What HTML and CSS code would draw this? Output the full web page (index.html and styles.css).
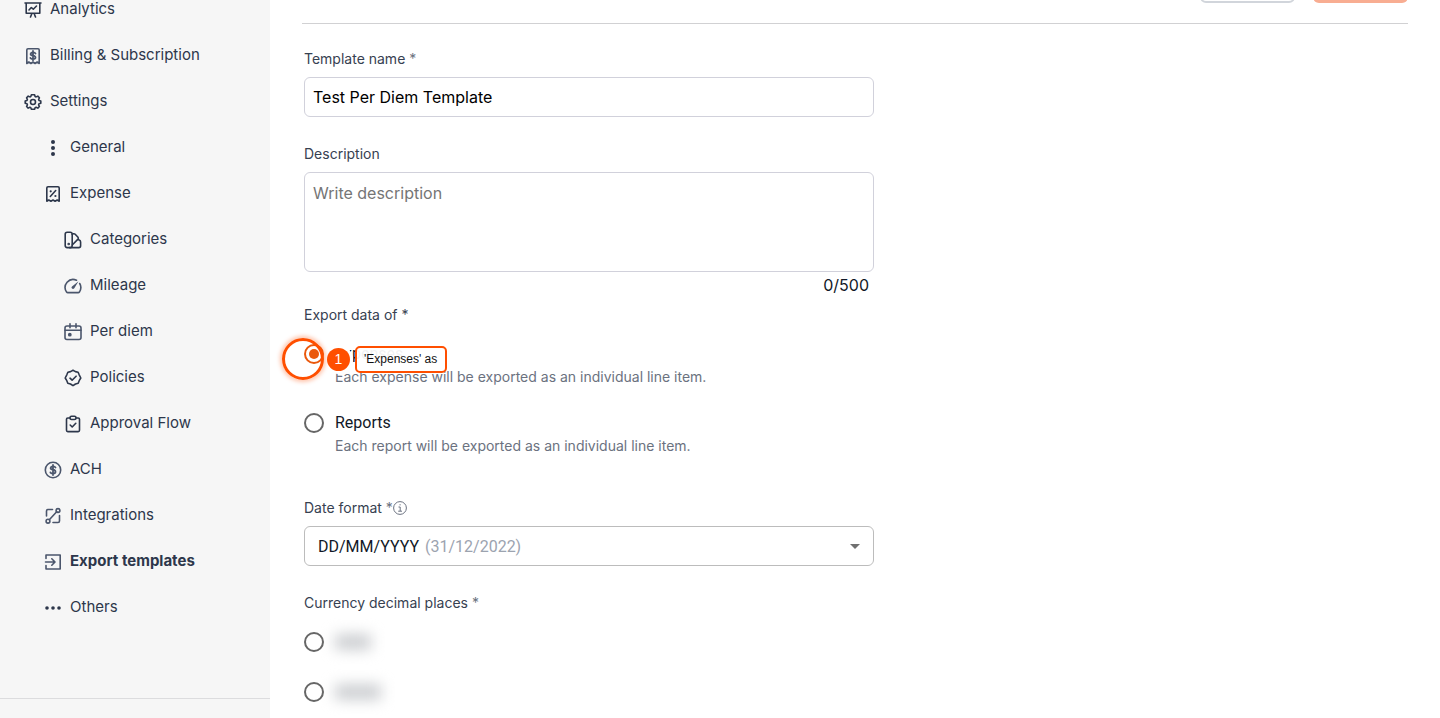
FILE: index.html
```html
<!DOCTYPE html>
<html lang="en">
<head>
<meta charset="utf-8">
<title>Export templates</title>
<link rel="stylesheet" href="styles.css">
</head>
<body>
<div class="layout">
  <aside class="sidebar">
    <nav class="nav">
      <a href="#"><svg viewBox="0 0 18 18"><path d="M1 2h16M2.200 2v10.300h13.600V2M6.500 16l1.200-3M11.500 16l-1.200-3M5 9l2.300-2.500 2 1.700L12.500 5"/></svg>Analytics</a>
      <a href="#" class="soft"><svg viewBox="0 0 18 18"><path d="M2.800 16.500V3Q2.800 1.700 4 1.700h10q1.200 0 1.200 1.300v13.500l-2-1.500-2.100 1.500L9 15l-2.100 1.500L4.800 15z"/><path d="M11.500 6.500Q11 5.300 9 5.300T6.600 7Q6.600 8.300 9 8.600t2.500 1.900Q11.500 12 9 12t-2.600-1.200M9 4v9.300" stroke-width="1.800"/></svg>Billing &amp; Subscription</a>
      <a href="#"><svg viewBox="0 0 18 18"><circle cx="9" cy="9" r="2.500"/><path d="M7.400 1.800h3.200l.5 1.700 1 .4 1.700-.8 1.600 1.700-.8 1.700.4.900 1.800.5v2.300l-1.800.6-.4 1 .8 1.700-1.600 1.600-1.700-.8-1 .4-.5 1.600H7.400l-.6-1.600-.9-.4-1.700.8-1.600-1.600.8-1.700-.4-1-1.800-.6V7.900l1.800-.5.4-.9-.8-1.700 1.600-1.700 1.700.8.9-.4z"/></svg>Settings</a>
      <a href="#" class="sub"><svg viewBox="0 0 18 18"><g class="dots"><circle cx="9" cy="3" r="2"/><circle cx="9" cy="9" r="2"/><circle cx="9" cy="15" r="2"/></g></svg>General</a>
      <a href="#" class="sub"><svg viewBox="0 0 18 18"><path d="M2.800 16.200V3Q2.800 1.800 4 1.800h10q1.200 0 1.200 1.200v13.200l-2-1.200-2.100 1.200L9 15l-2.100 1.200L4.800 15zM6.300 11.500l5.400-6"/><g class="dots"><circle cx="6.700" cy="6.300" r="1.100"/><circle cx="11.400" cy="11" r="1.100"/></g></svg>Expense</a>
      <a href="#" class="sub-2"><svg viewBox="0 0 18 18"><rect x="1.200" y="1.200" width="7" height="15.400" rx="2"/><path d="M8.200 3.200l1.200-.4q1-.3 1.800.5l2.800 3q.7.900 0 1.800L8.200 14M14.200 8.600l1 .3q1.400.5 1.400 2v3.900q0 1.800-1.800 1.800H5.500"/><circle cx="4.700" cy="13" r=".5"/></svg>Categories</a>
      <a href="#" class="sub-2 soft"><svg viewBox="0 0 18 18"><path d="M12.500 3.200A8 8 0 0 0 2.600 15q.4.600 1.200.6h10.400q.8 0 1.200-.6A8 8 0 0 0 15.700 6.500"/><path d="M14.500 4.300L10.300 11.300Q9.200 12.500 8 11.600T8 9.500z" fill="currentColor" stroke="none"/></svg>Mileage</a>
      <a href="#" class="sub-2 soft"><svg viewBox="0 0 18 18"><rect x="1" y="3" width="16" height="13.500" rx="2"/><path d="M1 7.300h16M6 .800v4M12 .800v4"/><circle cx="5.800" cy="11.700" r="1.100" fill="currentColor"/></svg>Per diem</a>
      <a href="#" class="sub-2"><svg viewBox="0 0 18 18"><path d="M9 1.300l2.400 1.300 2.700.6 1.100 2.600L16.800 9l-1.600 2.700-1 2.500-2.700.8L9 16.700 6.500 15l-2.700-.8-1-2.500L1.200 9l1.600-3.200 1.100-2.600 2.700-.6z"/><path d="M6 9.200l2.100 2 4-4"/></svg>Policies</a>
      <a href="#" class="sub-2"><svg viewBox="0 0 18 18"><path d="M6 3H3.800Q2.500 3 2.500 4.300v11q0 1.300 1.300 1.300h10.400q1.300 0 1.300-1.300v-11Q15.500 3 14.200 3H12"/><rect x="6" y="1.200" width="6" height="3.300" rx="1.500"/><path d="M6.200 10l2 2 3.600-3.700"/></svg>Approval Flow</a>
      <a href="#" class="sub soft"><svg viewBox="0 0 18 18"><circle cx="9" cy="9" r="7.700"/><path d="M11.500 6.500Q11 5.300 9 5.300T6.600 7Q6.600 8.300 9 8.700t2.500 2Q11.500 12.500 9 12.500t-2.600-1.200M9 4v10" stroke-width="1.800"/></svg>ACH</a>
      <a href="#" class="sub soft"><svg viewBox="0 0 18 18"><path d="M8.500 2.500H4Q2.500 2.500 2.500 4v5M15.500 8.500V14q0 1.500-1.500 1.500H9M5.300 12.700l7.400-8"/><circle cx="4" cy="14.200" r="1.900"/><circle cx="14" cy="3.500" r="1.900"/></svg>Integrations</a>
      <a href="#" class="sub soft current" aria-current="page"><svg viewBox="0 0 18 18"><path d="M2 5.500V2h14.200v14H2v-3.500M1.500 9h9.300M7.800 5.800L11 9l-3.200 3.200"/></svg>Export templates</a>
      <a href="#" class="sub"><svg viewBox="0 0 18 18"><g class="dots"><circle cx="3" cy="9" r="1.800"/><circle cx="9" cy="9" r="1.800"/><circle cx="15" cy="9" r="1.800"/></g></svg>Others</a>
    </nav>
    <div class="sidebar-footer"></div>
  </aside>

  <main class="main">
    <header class="toolbar">
      <button type="button" class="btn btn-outline" aria-label="Cancel"></button>
      <button type="button" class="btn btn-primary" aria-label="Save"></button>
    </header>
    <form class="form">
      <div class="field">
        <label class="label" for="name">Template name <span class="star">*</span></label>
        <input class="control" id="name" type="text" value="Test Per Diem Template">
      </div>
      <div class="field description">
        <label class="label" for="description">Description</label>
        <textarea class="control" id="description" placeholder="Write description"></textarea>
        <div class="counter">0/500</div>
      </div>
      <fieldset class="field export-data">
        <legend class="label">Export data of *</legend>
        <div class="option">
          <input type="radio" name="source" id="expenses" checked>
          <label for="expenses"><span class="option-title">Expenses</span><span class="option-text">Each expense will be exported as an individual line item.</span></label>
          <div class="callout">
            <span class="ring"></span>
            <span class="badge">1</span>
            <span class="tip">'Expenses' as</span>
          </div>
        </div>
        <div class="option">
          <input type="radio" name="source" id="reports">
          <label for="reports"><span class="option-title">Reports</span><span class="option-text">Each report will be exported as an individual line item.</span></label>
        </div>
      </fieldset>
      <div class="field">
        <label class="label" for="date">Date format <span class="star">*</span><svg class="info" viewBox="0 0 14 14"><circle cx="7" cy="7" r="6.400"/><path d="M5.500 6h1.700v4M5.200 10.200h3.800M6.500 3.800h1.200"/></svg></label>
        <div class="select">
          <select class="control" id="date"><option>DD/MM/YYYY</option></select>
          <span class="example">(31/12/2022)</span>
        </div>
      </div>
      <fieldset class="field decimals">
        <legend class="label">Currency decimal places <span class="star">*</span></legend>
        <div class="option"><input type="radio" name="places" aria-label="First choice"><span class="blur"></span></div>
        <div class="option"><input type="radio" name="places" aria-label="Second choice"><span class="blur wide"></span></div>
      </fieldset>
    </form>
  </main>
</div>
</body>
</html>
```
FILE: styles.css
```css
* { box-sizing: border-box; }

body {
  margin: 0;
  font-family: Inter, "Liberation Sans", sans-serif;
  font-size: 16px;
  color: #111827;
  background: #fff;
}

.layout { display: flex; height: 100vh; overflow: hidden; }

.sidebar {
  width: 270px;
  flex: none;
  display: flex;
  flex-direction: column;
  justify-content: space-between;
  background: #f6f6f6;
}
.nav { margin-top: -15px; }
.nav a {
  display: flex;
  align-items: center;
  gap: 8px;
  height: 46px;
  padding-left: 24px;
  font-size: 15px;
  color: #2d374b;
  text-decoration: none;
}
.nav a.sub { padding-left: 44px; }
.nav a.sub-2 { padding-left: 64px; }
.nav a.current { font-weight: 700; }
.nav svg {
  width: 18px;
  height: 18px;
  margin-top: 3px;
  fill: none;
  stroke: currentColor;
  stroke-width: 1.6;
  stroke-linecap: round;
  stroke-linejoin: round;
}
.nav .soft svg { color: #4b566c; }
.nav .dots { fill: currentColor; stroke: none; }
.sidebar-footer { flex: none; height: 20px; border-top: 1px solid #dcdcde; }

.main { flex: 1; padding: 0 32px; }
.toolbar {
  display: flex;
  justify-content: flex-end;
  gap: 18px;
  margin-top: -37px;
  padding-bottom: 20px;
  border-bottom: 1px solid #d1d1d3;
}
.btn { width: 95px; height: 40px; border-radius: 6px; border: 0; }
.btn-outline { background: #fff; border: 2px solid #d1d5db; }
.btn-primary { background: #f8ad92; }

.form { max-width: 572px; padding: 25px 0 0 2px; }
.field { margin: 0 0 27px; padding: 0; border: 0; min-width: 0; }
.label {
  display: flex;
  align-items: center;
  height: 20px;
  margin-bottom: 8px;
  padding: 0;
  font-size: 14px;
  line-height: 20px;
  color: #374151;
  white-space: pre;
}
.star { color: #6b7280; }
.control {
  display: block;
  width: 100%;
  height: 40px;
  padding: 0 8px;
  border: 1px solid #d1d1db;
  border-radius: 6px;
  background: #fff;
  font: inherit;
  color: #000;
}
textarea.control { height: 100px; padding: 8px; line-height: 24px; resize: none; }
.control::placeholder { color: #757575; }
.description { margin-bottom: 9px; }
.counter { padding: 2px 5px 0 0; text-align: right; line-height: 22px; }

.option { position: relative; display: flex; gap: 11px; }
.option input {
  appearance: none;
  display: grid;
  place-items: center;
  flex: none;
  width: 20px;
  height: 20px;
  margin: 3px 0 0;
  border: 2px solid #666;
  border-radius: 50%;
}
.option input:checked { border-color: #ea580c; }
.option input:checked::before {
  content: "";
  width: 10px;
  height: 10px;
  border-radius: 50%;
  background: #ea580c;
}
.option-title { display: block; font-family: Roboto, sans-serif; line-height: 26px; }
.option-text { display: block; font-size: 14px; line-height: 19px; color: #6b7280; }
.export-data { margin-bottom: 19px; }
.export-data .label { margin-bottom: 16px; }
.export-data .option { margin-bottom: 24px; }

.callout {
  position: absolute;
  left: -22px;
  top: -3px;
  display: flex;
  align-items: center;
}
.ring {
  z-index: 1;
  width: 42px;
  height: 42px;
  border: 3px solid #ff4f00;
  border-radius: 50%;
  box-shadow: 0 0 4px 2px #ff4f0055;
}
.badge {
  width: 23px;
  height: 23px;
  margin: 0 5px 0 3px;
  border-radius: 50%;
  background: #ff4f00;
  box-shadow: 0 0 0 3px #fff;
  color: #fff;
  font: 14px/23px "Liberation Sans", sans-serif;
  text-align: center;
}
.tip {
  padding: 0 8px 0 7px;
  border: 2px solid #ff4f00;
  border-radius: 5px;
  background: #fffffff0;
  font: 12px/23px "Liberation Sans", sans-serif;
  color: #111;
  white-space: nowrap;
}

.info { width: 14px; height: 14px; fill: none; stroke: #6b7280; stroke-width: 1; }
.select { display: grid; align-items: center; font-family: Roboto, sans-serif; }
.select > * { grid-area: 1 / 1; }
.select .control { appearance: none; padding: 0 13px; border-color: #bcbcbc; color: #111827; }
.select::after {
  content: "";
  grid-area: 1 / 1;
  justify-self: end;
  margin-right: 14px;
  border: 5px solid transparent;
  border-top-color: #707070;
  border-bottom: 0;
  pointer-events: none;
}
.example { padding-left: 121px; color: #9ca3af; pointer-events: none; }

.decimals .label { margin-bottom: 17px; }
.decimals .option { align-items: center; height: 24px; margin-bottom: 26px; }
.decimals .option input { margin: 0; }
.blur { width: 36px; height: 16px; background: #cdcfd2; filter: blur(7px); }
.blur.wide { width: 46px; }
```
